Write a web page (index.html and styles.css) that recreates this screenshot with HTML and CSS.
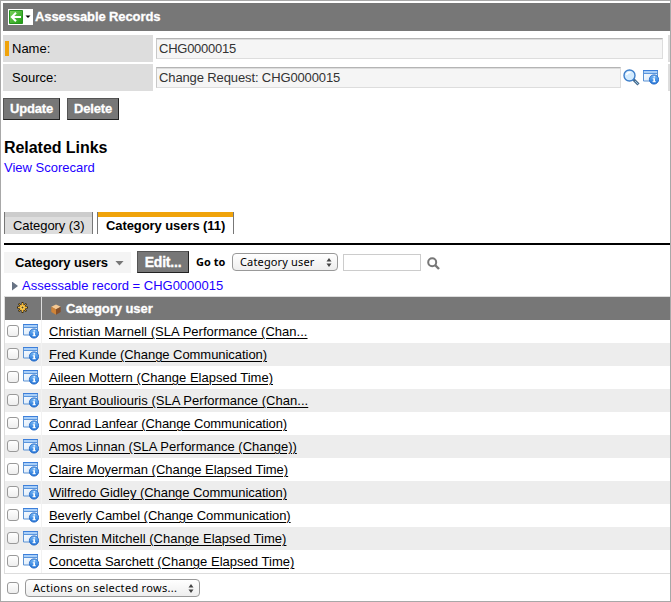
FILE: index.html
```
<!DOCTYPE html>
<html lang="en">
<head>
<meta charset="utf-8">
<title>Assessable Records</title>
<link rel="stylesheet" href="styles.css">
</head>
<body>
<svg class="defs" aria-hidden="true">
  <defs>
    <linearGradient id="blue" x1="0" y1="0" x2="0" y2="1"><stop offset="0" stop-color="#7cbcf8"/><stop offset="1" stop-color="#1b6fd6"/></linearGradient>
    <linearGradient id="green" x1="0" y1="0" x2="1" y2="1"><stop offset="0" stop-color="#7bd35c"/><stop offset="1" stop-color="#1c9a12"/></linearGradient>
    <linearGradient id="pane" x1="0" y1="0" x2="1" y2="1"><stop offset="0" stop-color="#fff"/><stop offset="1" stop-color="#cfe3f8"/></linearGradient>
    <symbol id="info" viewBox="0 0 16 16">
      <path d="M.5 1.500h14v10.500H.5z" fill="url(#pane)" stroke="#5b92d4"/>
      <path d="M0 1h15v1H0z" fill="#3c7fdb"/><path d="M1 2h13v2H1z" fill="#a9cff8"/><path d="M1 4h13v1H1z" fill="#5a95dd"/>
      <circle cx="11" cy="10.500" r="4.600" fill="url(#blue)" stroke="#2268c4" stroke-width=".9"/>
      <path d="M10.500 7.200h1.600v1.300h-1.600zM9.700 9.300h2.300v3h.8v.9H9.500v-.9h.9v-2.100h-.7z" fill="#fff"/>
    </symbol>
  </defs>
</svg>
<div class="page">
  <header class="titlebar">
    <span class="back">
      <svg width="25" height="16" viewBox="0 0 25 16"><path d="M0 0h25v16H0z" fill="#fff"/><path d="M1.500 1.500h13v13h-13z" fill="url(#green)" stroke="#279520"/><path d="M13 8H4M8 3.800L3.800 8 8 12.200" fill="none" stroke="#fff" stroke-width="2"/><path d="M17.500 6.500h5L20 9z" fill="#000"/></svg>
    </span>
    <h1>Assessable Records</h1>
  </header>

  <div class="form">
    <div class="field">
      <div class="label required">Name:</div>
      <div class="value"><div class="input name">CHG0000015</div></div>
      <div class="next"></div>
    </div>
    <div class="field">
      <div class="label">Source:</div>
      <div class="value"><div class="input source">Change Request: CHG0000015</div>
        <svg class="lens" width="17" height="17" viewBox="0 0 17 17"><path d="M10 10l5.500 5.500" stroke="#496c8e" stroke-width="3"/><path d="M12 12l3 3" stroke="#9cc5df" stroke-width="1"/><circle cx="6.500" cy="6.500" r="5.500" fill="#d3ebfe" stroke="#3e7fca" stroke-width="1.400"/><path d="M3.500 6a3.500 3.500 0 0 1 4-2.500" fill="none" stroke="#fff" stroke-width="1.500"/></svg>
        <svg class="ref" width="16" height="16"><use href="#info"/></svg>
      </div>
      <div class="next"></div>
    </div>
  </div>

  <div class="actions"><button class="btn update">Update</button><button class="btn delete">Delete</button></div>

  <h2>Related Links</h2>
  <a class="scorecard">View Scorecard</a>

  <nav class="tabs"><span class="tab">Category (3)</span><span class="tab active">Category users (11)</span></nav>

  <div class="toolbar">
    <span class="menu">Category users<i></i></span>
    <button class="btn edit">Edit...</button>
    <span class="goto">Go to</span>
    <span class="select cat">Category user<svg width="6" height="9" viewBox="0 0 6 9"><path d="M3 0l2.500 3.500h-5zM3 9L.5 5.500h5z"/></svg></span>
    <span class="search"></span>
    <svg class="find" width="13" height="13" viewBox="0 0 13 13"><circle cx="5.200" cy="5.200" r="4" fill="none" stroke="#777" stroke-width="2"/><path d="M8 8l4 4" stroke="#777" stroke-width="2.400"/></svg>
  </div>
  <div class="crumb"><i></i><a>Assessable record = CHG0000015</a></div>

  <div class="table">
    <div class="thead">
      <span class="gear"><svg width="11" height="11" viewBox="0 0 11 11"><path d="M5.500 0v11M0 5.500h11M1.600 1.600l7.800 7.800M9.400 1.600L1.600 9.400" stroke="#3d2c08" stroke-width="1.800"/><path d="M5.500 1v9M1 5.500h9M2.300 2.300l6.400 6.400M8.700 2.300L2.300 8.700" stroke="#eeb233"/><circle cx="5.500" cy="5.500" r="2.600" fill="#ffda67" stroke="#f0ad2a"/><circle cx="5.500" cy="5.500" r="1" fill="#543c0f"/></svg></span>
      <span class="col"><svg width="10" height="11" viewBox="0 0 10 11"><path d="M5 .5l4.700 2.300L5 5.500.3 2.800z" fill="#f5c993"/><path d="M.3 2.800L5 5.300v5.500L.3 8z" fill="#cf8438"/><path d="M9.700 2.800L5 5.300v5.500L9.700 8z" fill="#85502a"/></svg><b>Category user</b></span>
    </div>
    <div class="row"><i class="check"></i><svg width="16" height="16"><use href="#info"/></svg><a class="wide">Christian Marnell (SLA Performance (Chan...</a></div>
    <div class="row"><i class="check"></i><svg width="16" height="16"><use href="#info"/></svg><a class="snug">Fred Kunde (Change Communication)</a></div>
    <div class="row"><i class="check"></i><svg width="16" height="16"><use href="#info"/></svg><a>Aileen Mottern (Change Elapsed Time)</a></div>
    <div class="row"><i class="check"></i><svg width="16" height="16"><use href="#info"/></svg><a class="wide">Bryant Bouliouris (SLA Performance (Chan...</a></div>
    <div class="row"><i class="check"></i><svg width="16" height="16"><use href="#info"/></svg><a class="tight">Conrad Lanfear (Change Communication)</a></div>
    <div class="row"><i class="check"></i><svg width="16" height="16"><use href="#info"/></svg><a>Amos Linnan (SLA Performance (Change))</a></div>
    <div class="row"><i class="check"></i><svg width="16" height="16"><use href="#info"/></svg><a>Claire Moyerman (Change Elapsed Time)</a></div>
    <div class="row"><i class="check"></i><svg width="16" height="16"><use href="#info"/></svg><a class="snug">Wilfredo Gidley (Change Communication)</a></div>
    <div class="row"><i class="check"></i><svg width="16" height="16"><use href="#info"/></svg><a class="snug">Beverly Cambel (Change Communication)</a></div>
    <div class="row"><i class="check"></i><svg width="16" height="16"><use href="#info"/></svg><a class="wide">Christen Mitchell (Change Elapsed Time)</a></div>
    <div class="row"><i class="check"></i><svg width="16" height="16"><use href="#info"/></svg><a class="wide">Concetta Sarchett (Change Elapsed Time)</a></div>
  </div>
  <div class="footer"><i class="check"></i><span class="select rows">Actions on selected rows...<svg width="6" height="9" viewBox="0 0 6 9"><path d="M3 0l2.500 3.500h-5zM3 9L.5 5.500h5z"/></svg></span></div>
</div>
</body>
</html>
```
FILE: styles.css
```
* { box-sizing: border-box; }
body { margin: 0; font: 13px/16px "Liberation Sans", Arial, sans-serif; color: #000; background: #fff; }
.defs { position: absolute; width: 0; height: 0; }
svg { display: block; flex: none; }
.page { width: 671px; height: 602px; border: 1px solid #a8a8a8; overflow: hidden; display: flex; flex-direction: column; }
.titlebar { margin: 2px 0 0 2px; height: 28px; flex: none; background: #777; display: flex; align-items: center; padding-left: 5px; color: #fff; }
h1 { margin: 0 0 0 2px; font-size: 13px; line-height: 16px; letter-spacing: -.1px; -webkit-text-stroke: .3px #fff; }

.form { margin: 4px 0 0 2px; display: flex; flex-direction: column; gap: 2px; }
.field { display: flex; height: 27px; }
.label { width: 150px; background: #ddd; padding: 6px 0 0 9px; }
.required { padding-left: 2px; display: flex; }
.required::before { content: ""; width: 4px; height: 15px; background: #f0a30a; margin-right: 3px; }
.value { flex: 1; display: flex; padding: 3px 0 0 3px; }
.input { width: 507px; height: 21px; background: #f5f5f5; border: 1px solid #ddd; border-top-color: #b4b4b4; border-left-color: #c8c8c8; box-shadow: inset 0 1px #ddd; padding: 2px 2px; color: #333; letter-spacing: -.12px; }
.name { letter-spacing: -.25px; }
.source { width: 465px; }
.lens { margin: 2px 0 0 2px; }
.ref { margin: 2px 0 0 3px; }
.next { width: 2px; background: #ddd; }

.btn { font: bold 13px/16px "Liberation Sans", Arial, sans-serif; color: #fff; background: #777; border: 1px solid #555; border-right-color: #222; border-bottom-color: #222; border-radius: 0; padding: 0; height: 22px; letter-spacing: -.15px; -webkit-text-stroke: .3px #fff; }
.actions { display: flex; gap: 7px; margin: 7px 0 0 2px; }
.update { width: 57px; }
.delete { width: 52px; }
h2 { font-size: 16px; line-height: 18px; letter-spacing: -.05px; margin: 19px 0 0 3px; }
.scorecard { margin: 3px 0 0 3px; color: #20f; }

.tabs { display: flex; gap: 4px; height: 33px; margin: 36px 0 0 3px; border-bottom: 2px solid #000; flex: none; }
.tab { height: 22px; width: 89px; background: linear-gradient(#ccc 5px, #ddd 5px); border: solid #777; border-width: 0 1px; padding: 6px 0 0 8px; white-space: nowrap; letter-spacing: -.06px; }
.active { width: 137px; font-weight: bold; background: linear-gradient(#f0a30a 5px, #fff 5px); letter-spacing: -.08px; }

.toolbar { display: flex; height: 22px; margin: 6px 0 0 3px; align-items: center; flex: none; }
.menu { width: 127px; height: 21px; background: #f4f4f4; padding: 3px 0 0 11px; font-weight: bold; letter-spacing: -.12px; display: flex; flex: none; }
.menu i { width: 9px; height: 5px; background: #777; clip-path: polygon(0 0, 100% 0, 50% 100%); margin: 6px 0 0 7px; }
.edit { width: 52px; margin-left: 6px; font-size: 14px; letter-spacing: -.2px; flex: none; }
.goto { font: bold 11px/14px "Open Sans", sans-serif; width: 43px; padding-left: 7px; white-space: nowrap; flex: none; }
.select { font: 11px/16px "Noto Sans", sans-serif; letter-spacing: .15px; height: 18px; border: 1px solid #999; border-radius: 4px; background: linear-gradient(#fff, #eee); display: flex; align-items: center; justify-content: space-between; padding: 0 5px 0 7px; white-space: nowrap; fill: #444; }
.cat { width: 106px; }
.search { width: 78px; height: 17px; border: 1px solid #ccc; margin-left: 5px; }
.find { margin-left: 6px; margin-top: 2px; }
.crumb { display: flex; margin: 5px 0 0 11px; height: 16px; align-items: center; color: #20f; }
.crumb i { width: 6px; height: 9px; background: #687384; clip-path: polygon(0 0, 100% 50%, 0 100%); margin-right: 4px; }

.table { margin: 2px 0 0 3px; border: solid #ddd; border-width: 1px 0 1px 1px; }
.thead { display: flex; height: 23px; background: #777; color: #fff; }
.gear { width: 37px; padding: 5px 0 0 12px; border-right: 1px solid #ddd; }
.col { display: flex; padding: 4px 0 0 9px; }
.col svg { margin: 3px 5px 0 0; }
.col b { letter-spacing: -.06px; -webkit-text-stroke: .3px #fff; }
.row { height: 23px; display: flex; align-items: flex-start; padding-left: 2px; background: linear-gradient(#f2f2f2, #f2f2f2) 36px 0 / 1px 100% no-repeat #fff; }
.row:nth-child(odd) { background-color: #ededed; }
.row svg { margin: 3px 0 0 4px; }
.row a { margin: 4px 0 0 10px; text-decoration: underline; text-underline-offset: 2px; text-decoration-thickness: 1px; white-space: nowrap; }
.row .wide { letter-spacing: .03px; }
.row .snug { letter-spacing: -.05px; }
.row .tight { letter-spacing: -.11px; }
.check { width: 12px; height: 12px; margin-top: 5px; border: 1px solid #999; border-radius: 3px; background: linear-gradient(#fff, #eee); flex: none; }
.footer { display: flex; margin: 5px 0 0 6px; }
.footer .check { margin-top: 3px; }
.rows { width: 175px; margin-left: 6px; letter-spacing: .3px; }
```
